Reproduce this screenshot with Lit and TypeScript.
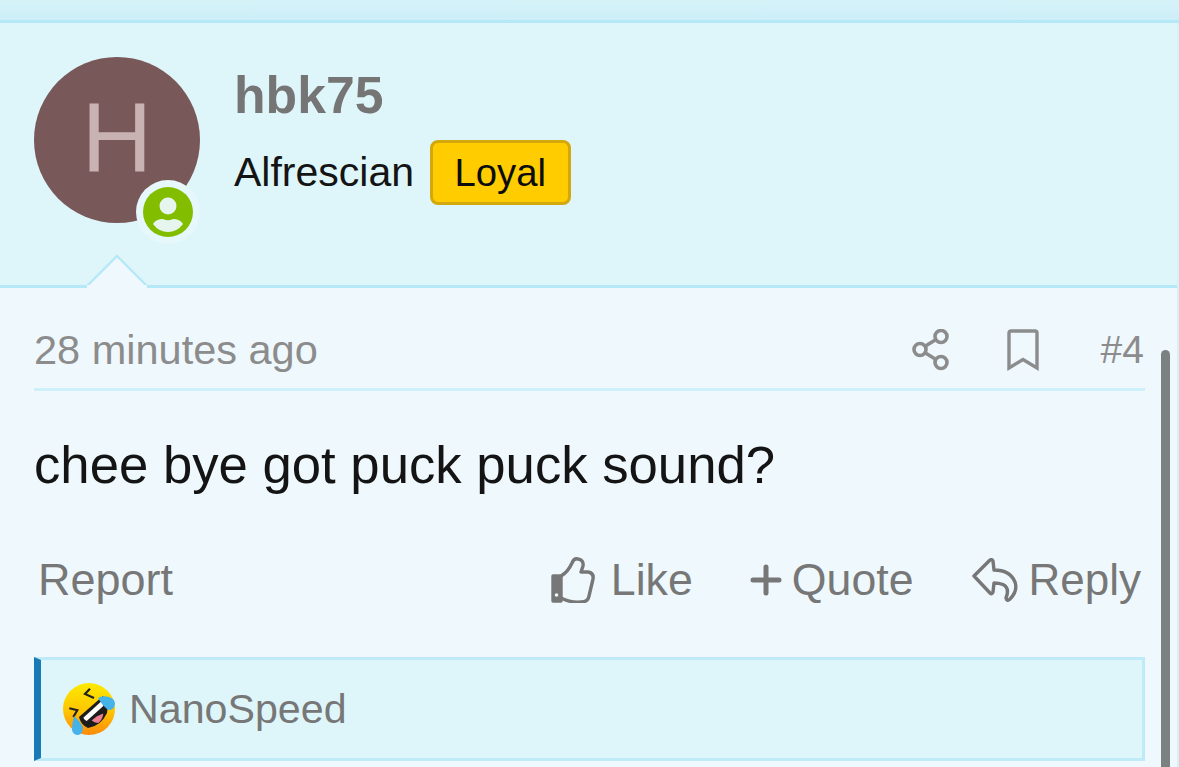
import { LitElement, html, css, svg } from "lit";
import { customElement } from "lit/decorators.js";

const emoji = svg`<svg class="emoji" viewBox="0 0 52 52" width="52" height="52">
  <defs><linearGradient id="g" x1="0" y1="0" x2="0" y2="1"><stop offset="0" stop-color="#fdea00"/><stop offset=".55" stop-color="#ffc400"/><stop offset="1" stop-color="#fb8a0c"/></linearGradient></defs>
  <circle cx="26" cy="26" r="26" fill="url(#g)"/>
  <path d="M16 34 L40 13 Q46 22 44 30 Q38 43 25 45 Q18 42 16 34Z" fill="#1c1c1c"/>
  <path d="M20.3 34.7 L38.7 18 Q40 20 40.3 23 L23.7 38 Q21.5 37 20.3 34.7Z" fill="#fff"/>
  <path d="M28.7 37.5 Q33 33 40.3 30.5 Q40 36 35.3 40 Q31 39.5 28.7 37.5Z" fill="#ec7f94"/>
  <path d="M27 5.7 L22 11 L31 15 M6.3 25.3 L14.3 27.3 L10.3 34" fill="none" stroke="#222" stroke-width="2.2"/>
  <path d="M35 15 Q40 12 46 14 Q52 16 52 21 Q51 27 46 27 Q41 25 35 15Z" fill="#45b2ea"/>
  <path d="M11 33 Q17 38 20 44 Q20 51 15 52 Q10 52 9 47 Q9 41 11 33Z" fill="#45b2ea"/>
</svg>`;

@customElement("app-root")
export class AppRoot extends LitElement {
  static styles = css`
    :host { display: block; width: 1179px; height: 767px; overflow: hidden; position: relative;
      font-family: "Liberation Sans", Arial, sans-serif; background: #eff9fd; }
    .strip { height: 20px; background: linear-gradient(#d6f2f9, #cdeff8); border-bottom: 3px solid #b6e9f8; }
    .user { position: relative; height: 265px; box-sizing: border-box; padding: 34px 34px 0; display: flex; gap: 34px;
      background: #def6fa; border-bottom: 3px solid #b6e9f8; }
    .avatar { position: relative; width: 166px; height: 166px; box-sizing: border-box; padding-bottom: 6px; border-radius: 50%; background: #785858; color: #c9b2b2;
      display: flex; align-items: center; justify-content: center; font-size: 98px; line-height: 1; flex: none; }
    .status { position: absolute; left: 102px; top: 123px; width: 64px; height: 64px; box-sizing: border-box; border-radius: 50%;
      background: #e6f8fb; display: flex; align-items: center; justify-content: center; }
    .who { display: flex; flex-direction: column; padding-top: 9px; }
    .name { font-size: 51.7px; font-weight: 700; line-height: 58px; color: #757575; }
    .title { display: flex; align-items: center; gap: 16px; margin-top: 16px; font-size: 41px; color: #141414; }
    .badge { height: 65px; box-sizing: border-box; padding: 0 21.5px; display: flex; align-items: center; border-radius: 8px;
      background: #ffcc00; border: 3px solid #d3a80d; color: #0c0c0c; font-size: 38.3px; }
    .notch { position: absolute; left: 84px; bottom: -3px; display: block; }
    .post { padding: 0 34px; }
    .meta { height: 103px; box-sizing: border-box; border-bottom: 3px solid #cdf0fa; display: flex; align-items: center;
      padding-top: 24px; color: #8c8c8c; font-size: 41.5px; }
    .time { flex: 1; }
    .share { margin-right: 57px; display: block; }
    .book { margin-right: 62px; display: block; }
    .num { font-size: 39px; padding-right: 1px; }
    .body { font-size: 52.7px; line-height: 60px; color: #141414; padding-top: 44px; height: 104px; box-sizing: content-box; }
    .actions { display: flex; align-items: center; height: 60px; margin-top: 11px; color: #777; font-size: 44.7px; padding: 0 4px; }
    .report { flex: 1; font-size: 45px; }
    .act { display: flex; align-items: center; }
    .like { margin-right: 57px; gap: 16px; }
    .quote { margin-right: 58px; gap: 10px; }
    .reply { gap: 11px; font-size: 44px; }
    .reactions { margin-top: 47px; height: 104px; box-sizing: border-box; border: 3px solid #bfebf8; border-left: 7px solid #1a7ab5;
      background: #def6fa; display: flex; align-items: center; gap: 14px; padding-left: 22px; color: #777; font-size: 41.2px; }
    .scroll { position: absolute; left: 1161px; top: 350px; width: 9px; height: 430px; border-radius: 5px; background: #7b8080; }
    .edge { position: absolute; right: 0; top: 23px; bottom: 0; width: 2px; background: #d4f1fa; }
  `;

  render() {
    return html`
      <div class="strip"></div>
      <section class="user">
        <div class="avatar">H
          <span class="status">
            <svg viewBox="0 0 50 50" width="50" height="50">
              <circle cx="25" cy="25" r="25" fill="#82bd00"/>
              <circle cx="25" cy="19" r="8.5" fill="#e6f6ee"/>
              <path d="M10 37 Q13 32 20 32 Q25 34.5 30 32 Q37 32 40 37 Q34 45 25 45 Q16 45 10 37Z" fill="#e6f6ee"/>
            </svg>
          </span>
        </div>
        <div class="who">
          <div class="name">hbk75</div>
          <div class="title"><span>Alfrescian</span><span class="badge">Loyal</span></div>
        </div>
        <svg class="notch" width="66" height="34" viewBox="0 0 66 34">
          <path d="M1 34 L33 2 L65 34" fill="#eff9fd" stroke="#b6e9f8" stroke-width="2.4"/>
          <rect x="3" y="31" width="60" height="3" fill="#eff9fd"/>
        </svg>
      </section>
      <section class="post">
        <div class="meta">
          <span class="time">28 minutes ago</span>
          <svg class="share" width="38" height="42" viewBox="0 0 38 42" fill="none" stroke="#8c8c8c" stroke-width="3.6">
            <circle cx="29" cy="7.5" r="6"/><circle cx="8" cy="20.5" r="6"/><circle cx="29" cy="33.5" r="6"/>
            <path d="M13.5 17 L24 10.5 M13.5 24 L24 30.5"/>
          </svg>
          <svg class="book" width="32" height="42" viewBox="0 0 32 42" fill="none" stroke="#8c8c8c" stroke-width="3.4">
            <path d="M2 39 V4 Q2 2 4 2 H28 Q30 2 30 4 V39 L16 30.5Z"/>
          </svg>
          <span class="num">#4</span>
        </div>
        <div class="body">chee bye got puck puck sound?</div>
        <div class="actions">
          <span class="report">Report</span>
          <span class="act like">
            <svg width="44" height="46" viewBox="0 0 44 46" fill="none" stroke="#777" stroke-width="3.4" stroke-linejoin="round">
              <path d="M10 19 Q17 15 21 6 Q23 1 27 2 Q33 3 32 9 L30 15 H37 Q43 16 42 22 L38 39 Q37 45 30 45 Q20 46 10 41"/>
              <path d="M2 19 H10 V44 H2Z" fill="#777"/>
              <circle cx="5.5" cy="38" r="1.8" fill="#eff9fd" stroke="none"/>
            </svg>
            Like
          </span>
          <span class="act quote">
            <svg width="32" height="32" viewBox="0 0 32 32" stroke="#777" stroke-width="5" stroke-linecap="round"><path d="M3 16 H29 M16 3 V29"/></svg>
            Quote
          </span>
          <span class="act reply">
            <svg width="46" height="44" viewBox="0 0 46 44" fill="none" stroke="#777" stroke-width="3.4" stroke-linejoin="round">
              <path d="M2 18 L18 2 Q20 1 21 3 L22 12 Q38 12 43 24 Q46 33 38 41 Q35 44 34 40 Q38 30 31 26.5 Q27 25 22 25 L21 34 Q20 37 18 35 Z"/>
            </svg>
            Reply
          </span>
        </div>
        <div class="reactions">${emoji}<span>NanoSpeed</span></div>
      </section>
      <div class="scroll"></div>
      <div class="edge"></div>
    `;
  }
}
